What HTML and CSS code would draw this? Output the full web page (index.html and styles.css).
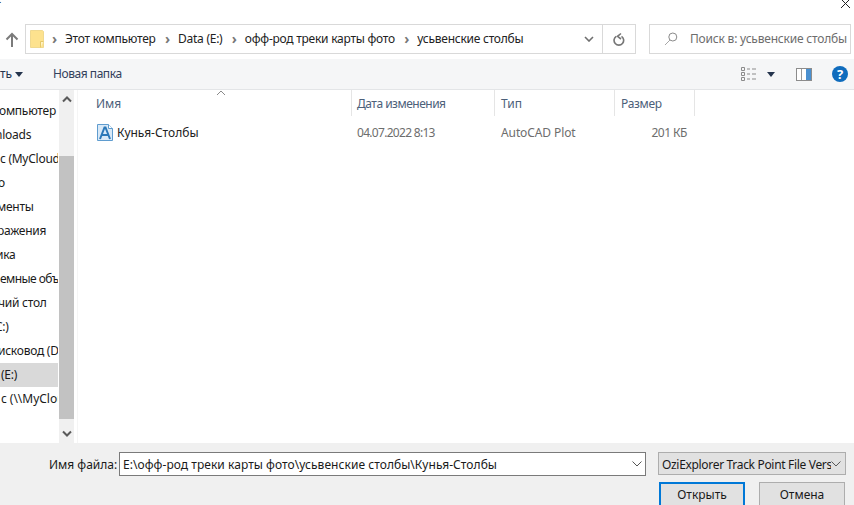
FILE: index.html
```html
<!DOCTYPE html>
<html lang="ru">
<head>
<meta charset="utf-8">
<title>Открыть</title>
<link rel="stylesheet" href="styles.css">
</head>
<body>
<div class="dialog">
  <div class="titlebar">
    <span class="title">е</span>
    <svg class="close" width="12" height="10" viewBox="0 0 12 10"><path d="M1 -1L10 8M10 -1L1 8" stroke="#222" fill="none"/></svg>
  </div>
  <div class="addressrow">
    <svg class="up" width="14" height="16" viewBox="0 0 14 16"><path d="M7 15V2M1.500 7.500L7 2l5.500 5.500" stroke="#7b7b7b" stroke-width="2" fill="none"/></svg>
    <div class="address">
      <svg class="folder" width="14" height="18" viewBox="0 0 14 18"><path d="M.5.500h12l1 1v16H.5z" fill="#fde28e" stroke="#f0d98f"/><path d="M10.500 17.500v-6h3" fill="#fff3c4" stroke="#e6c868"/></svg>
      <div class="crumbs">
        <span class="chev">›</span><span class="crumb">Этот компьютер</span>
        <span class="chev">›</span><span class="crumb">Data (E:)</span>
        <span class="chev">›</span><span class="crumb">офф-род треки карты фото</span>
        <span class="chev">›</span><span class="crumb">усьвенские столбы</span>
      </div>
      <svg class="drop" width="10" height="6" viewBox="0 0 10 6"><path d="M1 1l4 4 4-4" stroke="#6f6f6f" stroke-width="1.600" fill="none"/></svg>
      <div class="refresh">
        <svg width="12" height="14" viewBox="0 0 12 14"><path d="M3.200 3.300A4.800 4.800 0 1 0 8.500 3.300M8 .5L4.500 3.300 8 6" stroke="#767676" stroke-width="1.600" fill="none" transform="translate(0 1)"/></svg>
      </div>
    </div>
    <div class="search">
      <svg class="lens" width="14" height="14" viewBox="0 0 14 14"><circle cx="8.800" cy="5" r="4" stroke="#8a8a8a" fill="none"/><path d="M6 8L1 13" stroke="#a8a8a8" fill="none"/></svg>
      <span>Поиск в: усьвенские столбы</span>
    </div>
  </div>
  <div class="toolbar">
    <span class="tool-first">ть</span>
    <span class="caret"></span>
    <span class="newfolder">Новая папка</span>
    <div class="tool-right">
      <svg class="viewicon" width="16" height="14" viewBox="0 0 16 14"><path d="M.5.5h3v3h-3zM.5 5.500h3v3h-3zM.5 10.500h3v3h-3z" fill="none" stroke="#8b8b8b"/><path d="M6 2h3M11 2h4M6 7h3M11 7h4M6 12h3M11 12h4" stroke="#8b8b8b"/></svg>
      <span class="caret"></span>
      <svg class="paneicon" width="16" height="13" viewBox="0 0 16 13"><rect x=".5" y=".5" width="15" height="12" fill="#fff" stroke="#8c8c8c"/><rect x="5" y="1" width="1" height="11" fill="#9a9a9a"/><rect x="10" y="1" width="5" height="11" fill="#4a90d0"/></svg>
      <span class="help">?</span>
    </div>
  </div>
  <div class="main">
    <nav class="nav">
      <ul class="tree">
        <li class="i1">омпьютер</li>
        <li class="i5">nloads</li>
        <li>c (MyCloud</li>
        <li class="i2">о</li>
        <li class="i3">менты</li>
        <li class="i3">ражения</li>
        <li class="i4">ика</li>
        <li class="tight">емные объе</li>
        <li class="i2">чий стол</li>
        <li class="i6">C:)</li>
        <li class="i2">исковод (D:</li>
        <li class="selected">(E:)</li>
        <li class="p1">c (\\MyCloud</li>
      </ul>
    </nav>
    <div class="scrollbar">
      <svg width="10" height="7" viewBox="0 0 10 7"><path d="M1 5.500l4-4 4 4" stroke="#5a5a5a" stroke-width="2" fill="none"/></svg>
      <div class="thumb"></div>
      <svg width="10" height="7" viewBox="0 0 10 7"><path d="M1 1.500l4 4 4-4" stroke="#5a5a5a" stroke-width="2" fill="none"/></svg>
    </div>
    <div class="files">
      <div class="head">
        <div class="col name">Имя
          <svg class="sort" width="10" height="6" viewBox="0 0 10 6"><path d="M1 5l4-4 4 4" stroke="#8a8a8a" fill="none"/></svg>
        </div>
        <div class="col date">Дата изменения</div>
        <div class="col type">Тип</div>
        <div class="col size">Размер</div>
      </div>
      <div class="filerow">
        <div class="cell name">
          <svg class="fileicon" width="16" height="17" viewBox="0 0 16 17"><path d="M.5.500h11l4 4v12H.5z" fill="#d9e9f7" stroke="#5f9ccf"/><path d="M11.500.500v4h4" fill="#fff" stroke="#5f9ccf"/><path d="M3 15L7.500 3.500h1L13 15M5 11h6" stroke="#2c78b8" stroke-width="2" fill="none"/></svg>
          <span>Кунья-Столбы</span>
        </div>
        <div class="cell date">04.07.2022 8:13</div>
        <div class="cell type">AutoCAD Plot</div>
        <div class="cell size">201 КБ</div>
      </div>
    </div>
  </div>
  <div class="footer">
    <div class="fields">
      <label class="fname-label">Имя файла:</label>
      <div class="fname">
        <span>E:\офф-род треки карты фото\усьвенские столбы\Кунья-Столбы</span>
        <svg width="10" height="6" viewBox="0 0 10 6"><path d="M.5.500L5 5l4.500-4.500" stroke="#555" fill="none"/></svg>
      </div>
      <div class="filter">
        <span>OziExplorer Track Point File Vers</span>
        <svg width="10" height="6" viewBox="0 0 10 6"><path d="M.5.500L5 5l4.500-4.500" stroke="#555" fill="none"/></svg>
      </div>
    </div>
    <div class="buttons">
      <button class="btn primary">Открыть</button>
      <button class="btn">Отмена</button>
    </div>
  </div>
</div>
</body>
</html>
```
FILE: styles.css
```css
* { box-sizing: border-box; }
html, body { margin: 0; padding: 0; }
body { width: 854px; height: 505px; overflow: hidden; background: #fff; font: 12px/16px "Noto Sans", "Open Sans", sans-serif; color: #1a1a1a; }
.dialog { width: 854px; height: 505px; display: flex; flex-direction: column; overflow: hidden; }
.titlebar { height: 23px; flex: none; display: flex; justify-content: space-between; padding-right: 2px; align-items: flex-start; }
.title { margin: -9px 0 0 -5px; }
.close { display: block; }
.addressrow { height: 31px; flex: none; display: flex; align-items: center; padding-left: 5px; }
.up { flex: none; margin-right: 6px; margin-top: 2px; }
.address { width: 611px; height: 30px; border: 1px solid #d9d9d9; display: flex; align-items: center; padding-left: 4px; }
.folder { flex: none; margin-right: 8px; }
.crumbs { flex: 1; display: flex; align-items: center; white-space: nowrap; color: #222; letter-spacing: -.25px; }
.chev { width: 6px; margin-right: 7px; color: #777; font-size: 14px; font-weight: 700; line-height: 16px; }
.crumb { margin-right: 9.4px; }
.drop { flex: none; margin-right: 8px; }
.refresh { width: 33px; height: 100%; border-left: 1px solid #d9d9d9; display: flex; align-items: center; justify-content: center; flex: none; }
.search { width: 202px; height: 30px; margin-left: 13px; border: 1px solid #d9d9d9; display: flex; align-items: center; padding-left: 14px; gap: 12px; color: #6d6d6d; white-space: nowrap; overflow: hidden; letter-spacing: -.2px; }
.lens { flex: none; }
.toolbar { height: 31px; margin-top: 5px; flex: none; background: #f5f6f7; border-bottom: 1px solid #e3e5e7; display: flex; align-items: center; color: #33415c; }
.tool-first { width: 15px; color: #24344d; }
.caret { width: 0; height: 0; border: 4px solid transparent; border-top: 5px solid #24344d; border-bottom: 0; flex: none; }
.newfolder { margin-left: 30px; letter-spacing: -.45px; }
.tool-right { margin-left: auto; display: flex; align-items: center; padding-right: 6px; }
.viewicon { margin-right: 10px; }
.paneicon { margin-left: 21px; margin-right: 20px; }
.help { width: 16px; height: 16px; border-radius: 50%; background: #0f6cbd; color: #fff; font-weight: 700; font-size: 13px; line-height: 16px; text-align: center; }
.main { height: 353px; flex: none; display: flex; }
.nav { width: 59px; flex: none; overflow: hidden; padding-top: 9px; }
.tree { list-style: none; margin: 0; padding: 0; letter-spacing: -.25px; }
.tree li { height: 24px; line-height: 24px; width: 58px; overflow: hidden; white-space: nowrap; }
.tree .i1 { text-indent: -1px; }
.tree .i2 { text-indent: -2px; }
.tree .i3 { text-indent: -3px; }
.tree .i4 { text-indent: -4px; }
.tree .i5 { text-indent: -5px; }
.tree .i6 { text-indent: -5px; }
.tree .tight { letter-spacing: -.55px; }
.tree .p1 { padding-left: 1px; letter-spacing: -.02px; }
.tree .selected { background: #d9d9d9; padding-left: 1px; }
.scrollbar { width: 15px; flex: none; background: #f0f0f0; display: flex; flex-direction: column; align-items: center; padding-top: 6px; }
.thumb { width: 15px; height: 263px; margin-top: 53px; background: #c2c2c2; }
.scrollbar svg:last-child { margin-top: 11px; }
.files { flex: 1; margin-left: 3px; border-left: 1px solid #f5f5f5; display: flex; flex-direction: column; }
.head, .filerow { display: flex; }
.head { height: 26px; color: #4c607a; }
.col { height: 26px; border-right: 1px solid #e5e5e5; line-height: 28px; flex: none; }
.name { width: 274px; position: relative; padding-left: 18px; }
.date { width: 143px; padding-left: 5px; letter-spacing: -.5px; }
.type { width: 120px; padding-left: 6px; }
.size { width: 80px; padding-left: 6px; letter-spacing: -.3px; }
.sort { position: absolute; top: 0; left: 138px; }
.filerow { margin-top: 8px; height: 18px; color: #6d6d6d; align-items: center; }
.cell { flex: none; }
.cell.name { display: flex; align-items: center; gap: 4px; color: #222; padding-left: 19px; }
.cell.name svg { margin-top: -2px; }
.cell.date { letter-spacing: -.7px; }
.cell.type { letter-spacing: -.1px; }
.cell.size { width: 72px; padding: 0; text-align: right; letter-spacing: -.5px; }
.fileicon { flex: none; }
.footer { flex: 1; background: #f0f0f0; display: flex; flex-direction: column; padding-top: 9px; }
.fields { display: flex; height: 24px; align-items: flex-start; }
.fname-label { margin-left: 49px; width: 70px; line-height: 26px; }
.fname { width: 527px; height: 24px; background: #fff; border: 1px solid #7a7a7a; display: flex; align-items: center; justify-content: space-between; padding: 0 3px 0 3px; white-space: nowrap; letter-spacing: .05px; }
.fname span { padding-top: 2px; }
.filter { width: 188px; height: 23px; margin-left: 12px; background: #e1e1e1; border: 1px solid #adadad; display: flex; align-items: center; padding: 0 4px 0 3px; justify-content: space-between; white-space: nowrap; overflow: hidden; letter-spacing: -.32px; }
.filter span { width: 170px; overflow: hidden; padding-top: 2px; }
.buttons { display: flex; margin-top: 6px; margin-left: 659px; gap: 14px; }
.btn { width: 86px; height: 26px; background: #e1e1e1; border: 1px solid #adadad; font: inherit; color: #1a1a1a; padding: 0; flex: none; }
.primary { border: 2px solid #0078d7; }
```
